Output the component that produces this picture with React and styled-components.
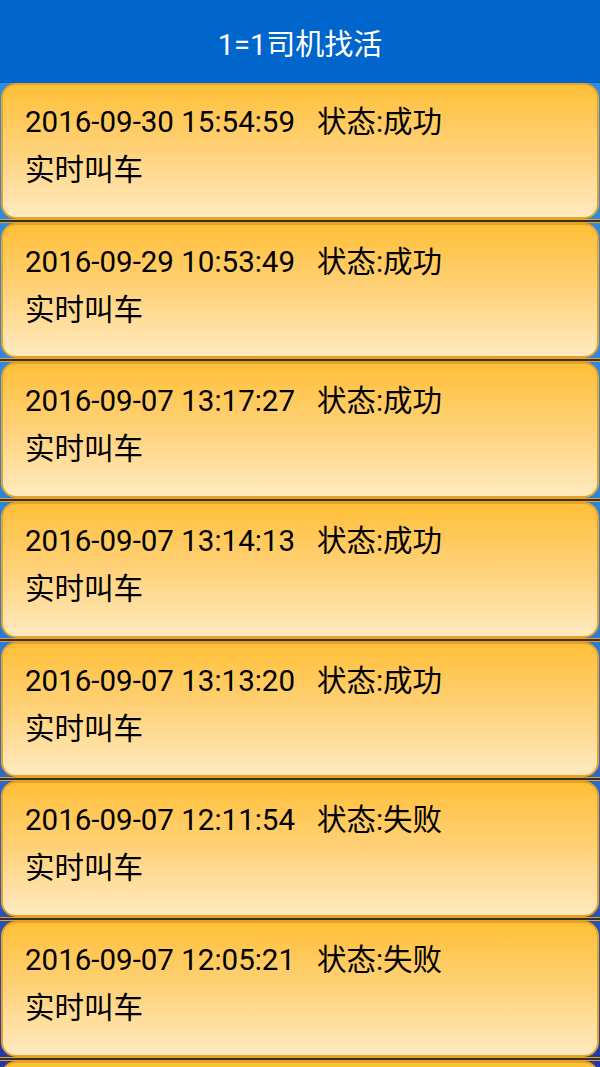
import React from 'react';
import styled, { createGlobalStyle } from 'styled-components';

const GlobalStyle = createGlobalStyle`
	html, body {
		margin: 0;
		padding: 0;
		background: #1e2e9a;
	}
	body {
		font-family: Roboto, "Noto Sans CJK SC", sans-serif;
	}
`;

const Root = styled.div`
	width: 600px;
	height: 1067px;
	overflow: hidden;
	display: flex;
	flex-direction: column;
`;
const TitleBar = styled.div`
	flex: 0 0 83px;
	display: flex;
	align-items: center;
	justify-content: center;
	background: #0066cc;
	color: #fff;
	font-size: 29px;
	box-sizing: border-box;
`;
const List = styled.div`
	flex: 1;
	background: linear-gradient(
		to bottom,
		#2f8ee2 0%,
		#2a82da 45%,
		#2a5cc4 70%,
		#2238a6 88%,
		#1e2c98 100%
	);
`;
const Item = styled.div`
	height: 139.67px;
	display: flex;
	flex-direction: column;
`;
const Card = styled.div`
	flex: 1;
	box-sizing: border-box;
	margin: 0 1px;
	border: 2px solid #e6a226;
	border-radius: 15px;
	background: linear-gradient(to bottom, #ffbf38 0%, #ffd27a 50%, #ffeac0 100%);
	padding: 13px 0 0 22px;
	color: #000;
	font-size: 29.5px;
	line-height: 48px;
`;
const Divider = styled.div`
	flex: 0 0 2px;
	height: 2px;
	background: #3a3020;
	border-top: 1px solid #e6a226;
	border-bottom: 1px solid #e6a226;
`;
const Row = styled.div`
	white-space: pre;
	height: 48px;
`;

const records = [
	{ time: '2016-09-30 15:54:59', status: '成功' },
	{ time: '2016-09-29 10:53:49', status: '成功' },
	{ time: '2016-09-07 13:17:27', status: '成功' },
	{ time: '2016-09-07 13:14:13', status: '成功' },
	{ time: '2016-09-07 13:13:20', status: '成功' },
	{ time: '2016-09-07 12:11:54', status: '失败' },
	{ time: '2016-09-07 12:05:21', status: '失败' },
];

export default function App() {
	return (
		<>
			<GlobalStyle />
			<Root>
				<TitleBar>1=1司机找活</TitleBar>
				<List>
					{records.map(({ time, status }, i) => (
						<Item key={i}>
							<Card>
								<Row>{`${time}   状态:${status}`}</Row>
								<Row>实时叫车</Row>
							</Card>
							<Divider />
						</Item>
					))}
					{/* next record, only its top edge is on screen */}
					<Item>
						<Card />
					</Item>
				</List>
			</Root>
		</>
	);
}
